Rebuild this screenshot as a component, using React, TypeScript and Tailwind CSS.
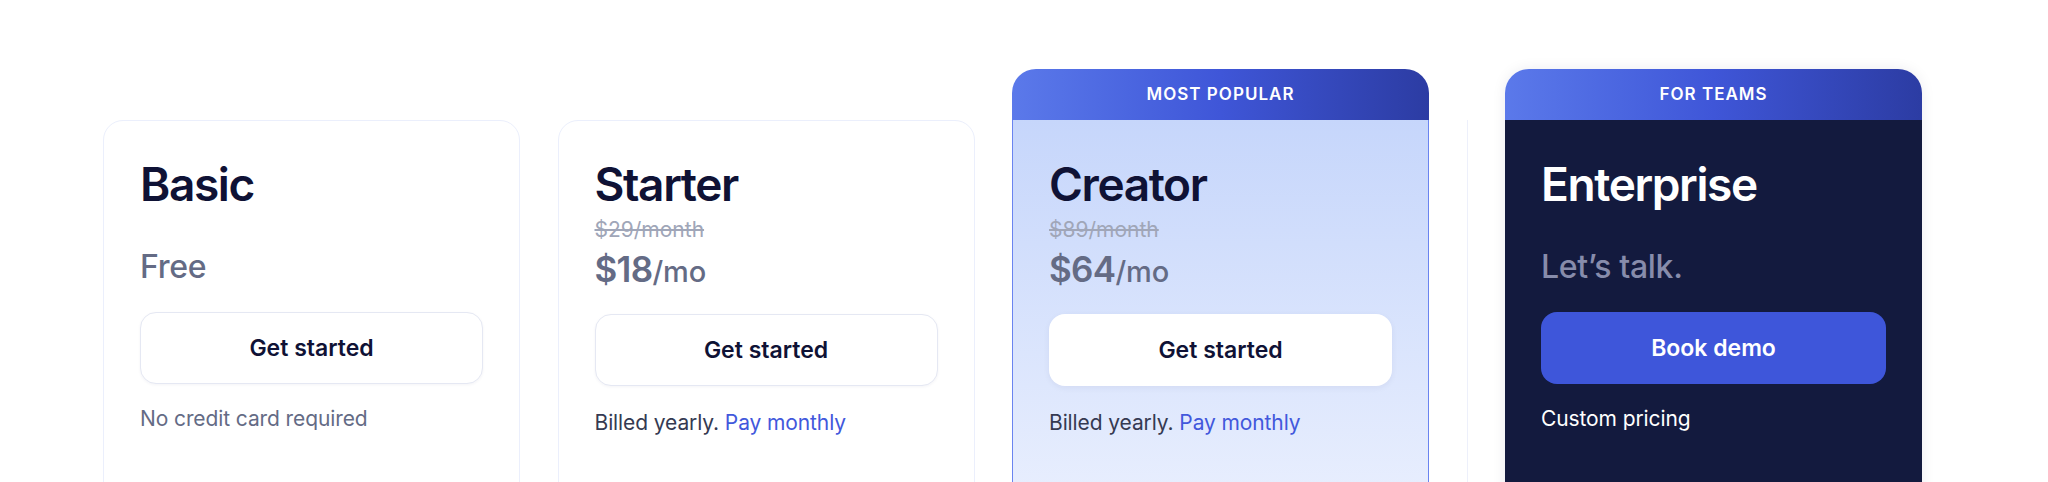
import React from "react";

type Plan = {
  name: string;
  badge?: string;
  oldPrice?: string;
  price: string;
  unit?: string;
  cta: string;
  note: React.ReactNode;
  variant: "plain" | "popular" | "dark";
};

const plans: Plan[] = [
  {
    name: "Basic",
    price: "Free",
    cta: "Get started",
    note: <span className="text-[#646b85]">No credit card required</span>,
    variant: "plain",
  },
  {
    name: "Starter",
    oldPrice: "$29/month",
    price: "$18",
    unit: "/mo",
    cta: "Get started",
    note: (
      <span className="text-[#353a52]">
        Billed yearly. <span className="text-[#4258dc]">Pay monthly</span>
      </span>
    ),
    variant: "plain",
  },
  {
    name: "Creator",
    badge: "MOST POPULAR",
    oldPrice: "$89/month",
    price: "$64",
    unit: "/mo",
    cta: "Get started",
    note: (
      <span className="text-[#353a52]">
        Billed yearly. <span className="text-[#4258dc]">Pay monthly</span>
      </span>
    ),
    variant: "popular",
  },
  {
    name: "Enterprise",
    badge: "FOR TEAMS",
    price: "Let’s talk.",
    cta: "Book demo",
    note: <span className="text-white">Custom pricing</span>,
    variant: "dark",
  },
];

function Badge({ label }: { label: string }) {
  return (
    <div className="h-[51px] rounded-t-[24px] bg-gradient-to-r from-[#5b79ea] via-[#3f56d8] to-[#2c3ca3] flex items-center justify-center text-white text-[17px] font-semibold tracking-[0.06em]">
      {label}
    </div>
  );
}

function PlanCard({ plan }: { plan: Plan }) {
  const dark = plan.variant === "dark";
  const popular = plan.variant === "popular";

  const body =
    plan.variant === "plain"
      ? "border border-[#ebeffc] rounded-[20px] bg-white pt-[35px]"
      : popular
      ? "border-x border-[#6a84f0] bg-gradient-to-b from-[#c6d6fb] to-[#ecf1fe] pt-[36px]"
      : "bg-[#131a3e] pt-[36px]";

  const button = dark
    ? "bg-[#3e56da] text-white"
    : popular
    ? "bg-white text-[#0f1235] shadow-[0_2px_6px_rgba(30,40,90,0.06)]"
    : "bg-white text-[#0f1235] border border-[#e5e8f3] shadow-[0_1px_3px_rgba(30,40,90,0.05)]";

  return (
    <div
      className={`w-[417px] shrink-0 flex flex-col ${plan.badge ? "" : "pt-[51px]"} ${
        dark ? "shadow-[0_0_14px_rgba(20,26,62,0.08)] rounded-t-[24px]" : ""
      }`}
    >
      {plan.badge && <Badge label={plan.badge} />}
      <div className={`${body} h-[420px] px-[36px]`}>
        <h2
          className={`text-[46px] leading-[56px] font-semibold tracking-[-0.03em] ${
            dark ? "text-white" : "text-[#0f1235]"
          }`}
        >
          {plan.name}
        </h2>
        <div className={`${plan.unit ? "h-[77px]" : "h-[75px]"} flex flex-col justify-end`}>
          {plan.oldPrice && (
            <div className="text-[21px] leading-[26px] mb-[9px] text-[#a0a6b8] line-through">
              {plan.oldPrice}
            </div>
          )}
          {plan.unit ? (
            <div className="text-[35px] leading-[34px] text-[#646b85]">
              <span className="font-semibold tracking-[-0.02em]">{plan.price}</span>
              <span className="text-[29px] font-medium">{plan.unit}</span>
            </div>
          ) : (
            <div
              className={`text-[32px] leading-[40px] font-medium tracking-[-0.01em] ${
                dark ? "text-[#878cab]" : "text-[#646b85]"
              }`}
            >
              {plan.price}
            </div>
          )}
        </div>
        <button
          type="button"
          className={`mt-[25px] w-full h-[72px] rounded-[16px] text-[23px] font-semibold flex items-center justify-center ${button}`}
        >
          {plan.cta}
        </button>
        <p
          className={`${plan.unit ? "mt-[23px]" : "mt-[21px]"} text-[21px] leading-[28px] tracking-[-0.005em]`}
        >
          {plan.note}
        </p>
      </div>
    </div>
  );
}

export default function App() {
  return (
    <div
      className="w-full h-[482px] overflow-hidden bg-white"
      style={{ fontFamily: "Inter, 'Noto Sans', sans-serif" }}
    >
      <div className="flex items-start pl-[103px] pt-[69px] gap-[37.5px]">
        <PlanCard plan={plans[0]} />
        <PlanCard plan={plans[1]} />
        <PlanCard plan={plans[2]} />
        <div className="w-px self-stretch mt-[51px] bg-[#edf0fb]" />
        <PlanCard plan={plans[3]} />
      </div>
    </div>
  );
}
